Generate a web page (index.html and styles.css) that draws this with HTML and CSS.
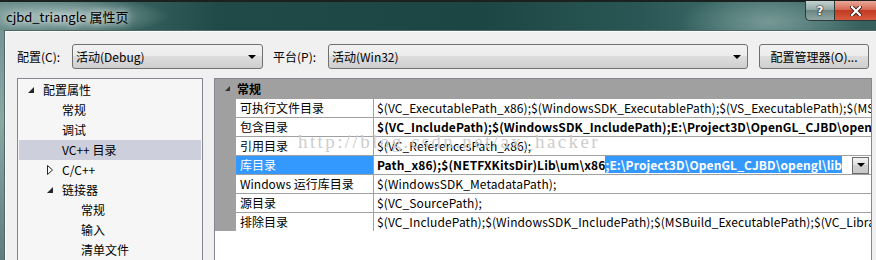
FILE: index.html
```html
<!DOCTYPE html>
<html lang="zh-CN">
<head>
    <meta charset="UTF-8">
    <title>cjbd_triangle 属性页</title>
    <link rel="stylesheet" href="styles.css">
</head>
<body>
<div class="window">
    <!-- 标题栏 -->
    <div class="titlebar">
        <span class="title">cjbd_triangle 属性页</span>
        <div class="caption">
            <span class="cap-btn help">?</span>
            <span class="cap-btn close">
                <svg width="12" height="10" viewBox="0 0 12 10">
                    <path d="M2,1 L10,9 M10,1 L2,9" stroke="#3a1a14" stroke-width="4" stroke-linecap="square"/>
                    <path d="M2,1 L10,9 M10,1 L2,9" stroke="#fff" stroke-width="2.2" stroke-linecap="square"/>
                </svg>
            </span>
        </div>
    </div>

    <div class="client">
        <!-- 配置 / 平台 -->
        <div class="toolbar">
            <span class="lbl">配置(C):</span>
            <div class="combo cfg"><span>活动(Debug)</span><i class="arrow"></i></div>
            <span class="lbl plat-lbl">平台(P):</span>
            <div class="combo plat"><span>活动(Win32)</span><i class="arrow"></i></div>
            <div class="btn">配置管理器(O)...</div>
        </div>

        <div class="main">
            <!-- 左侧树 -->
            <div class="tree">
                <div class="node lv0"><span class="tw"><svg width="7" height="7"><polygon points="6,0 6,6 0,6" fill="#262626"/></svg></span>配置属性</div>
                <div class="node lv1"><span class="tw"></span>常规</div>
                <div class="node lv1"><span class="tw"></span>调试</div>
                <div class="node lv1 sel"><span class="tw"></span>VC++ 目录</div>
                <div class="node lv1"><span class="tw"><svg width="7" height="10"><polygon points="0.5,0.5 5.5,5 0.5,9.5" fill="#fff" stroke="#262626"/></svg></span>C/C++</div>
                <div class="node lv1"><span class="tw"><svg width="7" height="7"><polygon points="6,0 6,6 0,6" fill="#262626"/></svg></span>链接器</div>
                <div class="node lv2"><span class="tw"></span>常规</div>
                <div class="node lv2"><span class="tw"></span>输入</div>
                <div class="node lv2"><span class="tw"></span>清单文件</div>
            </div>

            <!-- 属性表 -->
            <div class="grid">
                <div class="cat"><svg width="5" height="5"><polygon points="5,0 5,5 0,5" fill="#333"/></svg><span>常规</span></div>
                <div class="row"><i class="gut"></i><span class="name">可执行文件目录</span><span class="val">$(VC_ExecutablePath_x86);$(WindowsSDK_ExecutablePath);$(VS_ExecutablePath);$(MSBuild_ExecutablePath);$(SystemRoot)\SysWow64;$(FxCopDir);$(PATH);</span></div>
                <div class="row"><i class="gut"></i><span class="name">包含目录</span><span class="val bold">$(VC_IncludePath);$(WindowsSDK_IncludePath);E:\Project3D\OpenGL_CJBD\opengl\include</span></div>
                <div class="row"><i class="gut"></i><span class="name">引用目录</span><span class="val">$(VC_ReferencesPath_x86);</span></div>
                <div class="row sel"><i class="gut"></i><span class="name">库目录</span><span class="val edit"><span class="txt">Path_x86);$(NETFXKitsDir)Lib\um\x86<span class="hl">;E:\Project3D\OpenGL_CJBD\opengl\lib</span></span><span class="dd"><i class="arrow"></i></span></span></div>
                <div class="row"><i class="gut"></i><span class="name">Windows 运行库目录</span><span class="val">$(WindowsSDK_MetadataPath);</span></div>
                <div class="row"><i class="gut"></i><span class="name">源目录</span><span class="val">$(VC_SourcePath);</span></div>
                <div class="row"><i class="gut"></i><span class="name">排除目录</span><span class="val">$(VC_IncludePath);$(WindowsSDK_IncludePath);$(MSBuild_ExecutablePath);$(VC_LibraryPath_x86);</span></div>
                <div class="watermark">http://blog.csdn.net/ax_hacker</div>
            </div>
        </div>
    </div>
</div>
</body>
</html>
```

FILE: styles.css
```css
body {
    margin: 0;
    width: 876px;
    height: 260px;
    overflow: hidden;
    font-family: "Noto Sans CJK SC", sans-serif;
    font-size: 12px;
    color: #000;
    background: #2a5553;
}
.window {
    display: flex;
    flex-direction: column;
    height: 260px;
    background: linear-gradient(to bottom, #6f8f8c, #8aa7a4 120px, #5e7e7b);
}
.titlebar {
    flex-shrink: 0;
    height: 30px;
    box-sizing: border-box;
    border-top: 2px solid #1b2120;
    display: flex;
    justify-content: space-between;
    align-items: flex-start;
    background:
        radial-gradient(ellipse 110px 20px at 60px 14px, rgba(190, 210, 207, 0.75), rgba(190, 210, 207, 0) 100%),
        radial-gradient(ellipse 90px 30px at 770px 20px, rgba(140, 170, 167, 0.7), rgba(140, 170, 167, 0) 100%),
        linear-gradient(to right, #5f8582 0, #3b6663 110px, #1f4a48 220px, #1c4644 480px, #2a5755 640px, #42706d 760px, #365f5c 876px);
}
.title {
    margin: 5px 0 0 6px;
    line-height: 20px;
    font-size: 13px;
    color: #000;
    text-shadow: 0 0 6px rgba(255, 255, 255, 0.9), 0 0 12px rgba(255, 255, 255, 0.6);
}
.caption {
    display: flex;
    margin-top: -1px;
    margin-right: -1px;
}
.cap-btn {
    height: 20px;
    box-sizing: border-box;
    display: flex;
    align-items: center;
    justify-content: center;
    border: 1px solid #2c3a39;
    border-top: none;
}
.help {
    width: 29px;
    border-radius: 0 0 0 5px;
    border-right: none;
    background: linear-gradient(to bottom, #c4d2d1, #93aaa8 45%, #6c8583 50%, #8ea6a4);
    color: #fff;
    font-family: "DejaVu Sans", sans-serif;
    font-weight: bold;
    font-size: 12px;
    text-shadow: 0 0 2px #000, 0 0 1px #000;
}
.close {
    width: 43px;
    background: linear-gradient(to bottom, #e9a999, #d66a55 45%, #c23a22 50%, #d75b40);
}

.client {
    flex: 1;
    min-height: 0;
    overflow: hidden;
    margin-left: 4px;
    border-left: 1px solid #4f6866;
    border-top: 1px solid #4f6866;
    background: #f0f0f0;
    box-shadow: inset 1px 1px 0 #fbfbfb;
    padding: 13px 0 0 12px;
}
.toolbar {
    display: flex;
    align-items: center;
    height: 25px;
}
.lbl {
    width: 55px;
}
.plat-lbl {
    margin-left: 10px;
}
.combo {
    height: 25px;
    box-sizing: border-box;
    border: 1px solid #707070;
    border-radius: 3px;
    background: linear-gradient(to bottom, #f2f2f2, #ebebeb 50%, #dddddd 50%, #cfcfcf);
    display: flex;
    align-items: center;
    justify-content: space-between;
    padding: 0 6px 0 3px;
}
.cfg {
    width: 191px;
}
.plat {
    width: 420px;
}
.arrow {
    width: 0;
    height: 0;
    border-left: 4px solid transparent;
    border-right: 4px solid transparent;
    border-top: 4px solid #000;
}
.btn {
    width: 110px;
    height: 25px;
    margin-left: 11px;
    box-sizing: border-box;
    border: 1px solid #707070;
    border-radius: 3px;
    background: linear-gradient(to bottom, #f2f2f2, #ebebeb 50%, #dddddd 50%, #cfcfcf);
    display: flex;
    align-items: center;
    justify-content: center;
}

.main {
    display: flex;
    margin-top: 9px;
    height: 200px;
}
.tree {
    width: 186px;
    box-sizing: border-box;
    border: 1px solid #828790;
    padding: 1px;
    background: #f6f6f6;
}
.node {
    height: 20px;
    line-height: 20px;
    display: flex;
    align-items: center;
    white-space: nowrap;
}
.node.lv0 { padding-left: 9px; }
.node.lv1 { padding-left: 28px; }
.node.lv2 { padding-left: 47px; }
.node.sel {
    background: #cdd0dc;
}
.tw {
    width: 15px;
    display: flex;
    align-items: center;
}
.tw svg {
    display: block;
}

.grid {
    position: relative;
    width: 658px;
    margin-left: 11px;
    box-sizing: border-box;
    border: 1px solid #828790;
    background: #fff;
    overflow: hidden;
}
.cat {
    height: 19px;
    background: #a0a0a0;
    display: flex;
    align-items: center;
    padding-left: 10px;
    font-weight: bold;
}
.cat span {
    margin-left: 7px;
}
.row {
    display: flex;
    height: 18px;
    line-height: 18px;
    border-top: 1px solid #a0a0a0;
    white-space: nowrap;
}
.row:last-of-type {
    border-bottom: 1px solid #a0a0a0;
}
.gut {
    width: 21px;
    background: #a0a0a0;
}
.name {
    width: 138px;
    box-sizing: border-box;
    padding-left: 4px;
    border-right: 1px solid #a0a0a0;
}
.val {
    flex: 1;
    min-width: 0;
    padding-left: 3px;
    overflow: hidden;
    letter-spacing: 0.1px;
}
.bold {
    font-weight: bold;
}
.row.sel .name {
    background: #3399ff;
    color: #fff;
}
.val.edit {
    display: flex;
    align-items: center;
    padding-right: 2px;
    font-weight: bold;
}
.txt {
    flex: 1;
    min-width: 0;
    overflow: hidden;
}
.hl {
    background: #3399ff;
    color: #fff;
}
.dd {
    width: 17px;
    height: 17px;
    box-sizing: border-box;
    border: 1px solid #6d6d6d;
    background: linear-gradient(to bottom, #f4f4f4, #dedede 50%, #d0d0d0 50%, #c8c8c8);
    display: flex;
    align-items: center;
    justify-content: center;
}
.watermark {
    position: absolute;
    left: 83px;
    top: 52px;
    font-family: "Liberation Serif", serif;
    font-size: 19px;
    letter-spacing: 2.4px;
    color: #cdcdcd;
    white-space: nowrap;
    pointer-events: none;
}
```
